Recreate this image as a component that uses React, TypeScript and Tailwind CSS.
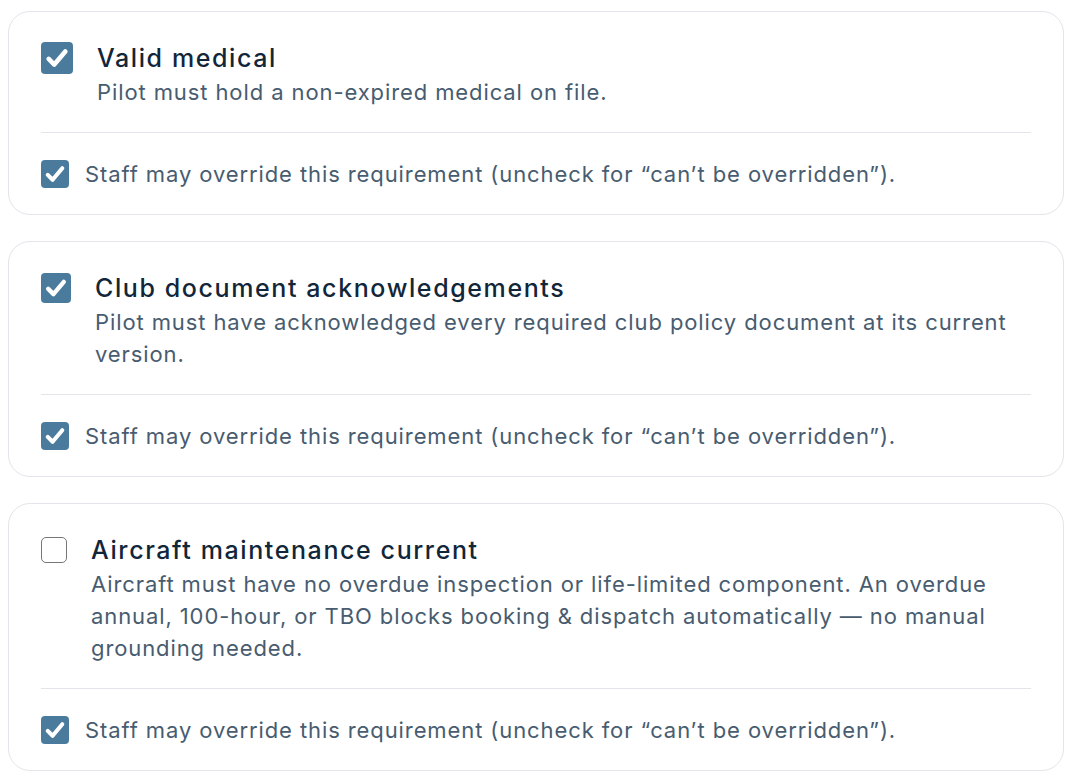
import React from "react";

function Box({ size, checked }: { size: number; checked: boolean }) {
  if (!checked) {
    return (
      <div
        className="shrink-0 rounded-[5px] border-[1.5px] border-[#767676] bg-white"
        style={{ width: size, height: size }}
      />
    );
  }
  return (
    <div
      className="shrink-0 rounded-[4px] bg-[#4a7b9d] flex items-center justify-center"
      style={{ width: size, height: size }}
    >
      <svg viewBox="0 0 20 20" width={size} height={size}>
        <path
          d="M4.8 10.6 L8.3 14.1 L15.2 5.9"
          fill="none"
          stroke="white"
          strokeWidth="2.9"
          strokeLinecap="round"
          strokeLinejoin="round"
        />
      </svg>
    </div>
  );
}

function Card({
  title,
  desc,
  checked,
  size,
}: {
  title: string;
  desc: string;
  checked: boolean;
  size: number;
}) {
  return (
    <div className="rounded-[22px] border border-[#e3e5ea] bg-white px-[32px]">
      <div className="flex items-start gap-[24px] pt-[28px] pb-[24px] border-b border-[#e3e5ea]">
        <div className="h-[36px] flex items-center">
          <Box size={size} checked={checked} />
        </div>
        <div className="min-w-0">
          <div className="text-[25px] leading-[36px] font-medium tracking-[1.6px] text-[#12263a]">{title}</div>
          <div className="text-[22px] leading-[32px] tracking-[0.9px] text-[#485c70]">{desc}</div>
        </div>
      </div>
      <div className="flex items-center gap-[16px] pt-[25px] pb-[24px]">
        <Box size={28} checked={true} />
        <div className="text-[22px] leading-[32px] tracking-[0.9px] text-[#485c70]">
          Staff may override this requirement (uncheck for “can’t be overridden”).
        </div>
      </div>
    </div>
  );
}

export default function App() {
  return (
    <div
      className="min-h-screen bg-white pt-[11px] pl-[8px] pr-[10px] flex flex-col gap-[26px]"
      style={{ fontFamily: "Inter, 'Noto Sans', sans-serif" }}
    >
      <Card
        title="Valid medical"
        desc="Pilot must hold a non-expired medical on file."
        checked={true}
        size={32}
      />
      <Card
        title="Club document acknowledgements"
        desc="Pilot must have acknowledged every required club policy document at its current version."
        checked={true}
        size={30}
      />
      <Card
        title="Aircraft maintenance current"
        desc="Aircraft must have no overdue inspection or life-limited component. An overdue annual, 100-hour, or TBO blocks booking & dispatch automatically — no manual grounding needed."
        checked={false}
        size={26}
      />
    </div>
  );
}
